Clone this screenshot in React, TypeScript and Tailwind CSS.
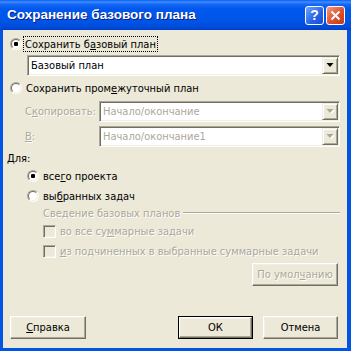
import React from 'react';

const dis = 'text-[#ACA899] [text-shadow:1px_1px_0_#ffffff]';

function Acc({ text, i }: { text: string; i: number }) {
  return (
    <>
      {text.slice(0, i)}
      <u>{text[i]}</u>
      {text.slice(i + 1)}
    </>
  );
}

function Radio({ checked }: { checked?: boolean }) {
  return (
    <span className="relative w-3 h-3 shrink-0 rounded-full border border-t-[#ACA899] border-l-[#ACA899] border-r-white border-b-white">
      <span className="absolute inset-0 flex items-center justify-center rounded-full border border-t-[#716F64] border-l-[#716F64] border-r-[#F1EFE2] border-b-[#F1EFE2] bg-white">
        {checked && <span className="w-1 h-1 rounded-[1px] bg-black" />}
      </span>
    </span>
  );
}

function Check() {
  return (
    <span className="w-[13px] h-[13px] shrink-0 border border-t-[#ACA899] border-l-[#ACA899] border-r-white border-b-white bg-[#ECE9D8] shadow-[inset_1px_1px_0_#716F64,inset_-1px_-1px_0_#F1EFE2]" />
  );
}

function Arrow({ disabled }: { disabled?: boolean }) {
  return (
    <svg width="8" height="5" viewBox="0 0 8 5">
      {disabled && <path d="M2 1h7l-3.5 4z" fill="#ffffff" />}
      <path d="M0.5 0h7l-3.5 4z" fill={disabled ? '#ACA899' : '#000000'} />
    </svg>
  );
}

function Combo({ value, disabled, className }: { value: string; disabled?: boolean; className?: string }) {
  return (
    <div
      className={`h-[21px] flex p-px bg-white border border-t-[#ACA899] border-l-[#ACA899] border-r-white border-b-white shadow-[inset_1px_1px_0_#716F64,inset_-1px_-1px_0_#F1EFE2] ${className ?? ''}`}
    >
      <div className={`flex-1 flex items-center pl-[2px] ${disabled ? 'text-[#ACA899]' : 'text-black'}`}>{value}</div>
      <div className="w-4 h-full flex items-center justify-center bg-[#ECE9D8] border border-t-[#F1EFE2] border-l-[#F1EFE2] border-r-[#716F64] border-b-[#716F64] shadow-[inset_1px_1px_0_#ffffff,inset_-1px_-1px_0_#ACA899]">
        <Arrow disabled={disabled} />
      </div>
    </div>
  );
}

function Btn({
  children,
  isDefault,
  disabled,
  className,
}: {
  children: React.ReactNode;
  isDefault?: boolean;
  disabled?: boolean;
  className?: string;
}) {
  const face = (
    <div
      className={`w-full h-full flex items-center justify-center bg-[#ECE9D8] border border-t-white border-l-white border-r-[#716F64] border-b-[#716F64] shadow-[inset_-1px_-1px_0_#ACA899,inset_1px_1px_0_#F1EFE2] ${disabled ? dis : 'text-black'}`}
    >
      {children}
    </div>
  );
  return (
    <div className={`h-[23px] ${isDefault ? 'border border-black' : ''} ${className ?? ''}`}>{face}</div>
  );
}

export default function App() {
  return (
    <div className="w-[351px] h-[351px] flex flex-col bg-[#0055E5] font-['DejaVu_Sans_Condensed','DejaVu_Sans',sans-serif] text-[11px] leading-none select-none">
      {/* Title bar */}
      <div className="h-[30px] shrink-0 flex items-center pl-[7px] pr-[6px] bg-[linear-gradient(to_bottom,#0A5EF8_0%,#3D8EFF_7%,#1667F5_14%,#0058EE_30%,#0055E6_70%,#004CDB_90%,#003FC8_100%)]">
        <span className="flex-1 text-white font-bold text-[13.5px] font-['Liberation_Sans',Arial,sans-serif] [text-shadow:1px_1px_0_#0A1E8C]">
          Сохранение базового плана
        </span>
        <div className="flex gap-[2px]">
          <div className="w-[19px] h-[19px] rounded-[3px] border border-white bg-[linear-gradient(135deg,#6FA4FF,#2562E8_60%,#1A4FD0)] flex items-center justify-center text-white font-bold text-[14px] font-['Liberation_Sans',Arial,sans-serif]">
            ?
          </div>
          <div className="w-[19px] h-[19px] rounded-[3px] border border-white bg-[linear-gradient(135deg,#F29B80,#E0502A_55%,#C23A18)] flex items-center justify-center">
            <svg width="11" height="11" viewBox="0 0 11 11">
              <path d="M1.5 1.5l8 8M9.5 1.5l-8 8" stroke="#ffffff" strokeWidth="2" />
            </svg>
          </div>
        </div>
      </div>

      {/* Body */}
      <div className="flex-1 ml-[3px] mr-[4px] mb-[3px] bg-[#ECE9D8] flex flex-col text-black pt-[6px]">
        <div className="h-4 flex items-center pl-[7px]">
          <Radio checked />
          <span className="ml-px h-4 flex items-center px-px border border-dotted border-black">
            Сохранить б<u>а</u>зовый план
          </span>
        </div>
        <Combo value="Базовый план" className="mt-[3px] ml-[24px] w-[313px]" />

        <div className="mt-[4px] h-4 flex items-center pl-[7px] gap-[4px]">
          <Radio />
          <span>
            <Acc text="Сохранить промежуточный план" i={14} />
          </span>
        </div>

        <div className="mt-[5px] flex items-center pl-[22px]">
          <span className={`w-[74px] ${dis}`}>
            <Acc text="Скопировать:" i={1} />
          </span>
          <Combo value="Начало/окончание" disabled className="w-[241px]" />
        </div>
        <div className="mt-[4px] flex items-center pl-[22px]">
          <span className={`w-[74px] ${dis}`}>
            <u>В</u>:
          </span>
          <Combo value="Начало/окончание1" disabled className="w-[241px]" />
        </div>

        <div className="mt-[3px] h-4 flex items-center pl-[4px]">Для:</div>
        <div className="mt-[2px] h-4 flex items-center pl-[24px] gap-[4px]">
          <Radio checked />
          <span>
            <Acc text="всего проекта" i={3} />
          </span>
        </div>
        <div className="mt-[4px] h-4 flex items-center pl-[24px] gap-[4px]">
          <Radio />
          <span>
            <Acc text="выбранных задач" i={2} />
          </span>
        </div>

        <div className="mt-[1px] h-4 flex items-center pl-[40px] pr-[7px]">
          <span className={dis}>Сведение базовых планов</span>
          <span className="flex-1 ml-[3px] border-t border-t-[#ACA899] border-b border-b-white" />
        </div>
        <div className="mt-[2px] h-4 flex items-center pl-[40px] gap-[4px]">
          <Check />
          <span className={dis}>
            <Acc text="во все суммарные задачи" i={9} />
          </span>
        </div>
        <div className="mt-[4px] h-4 flex items-center pl-[40px] gap-[4px]">
          <Check />
          <span className={dis}>
            <Acc text="из подчиненных в выбранные суммарные задачи" i={0} />
          </span>
        </div>

        <div className="mt-[4px] flex justify-end pr-[9px]">
          <Btn disabled className="w-[86px]">
            <span>
              По умол<u>ч</u>анию
            </span>
          </Btn>
        </div>

        <div className="mt-[30px] flex pl-[7px] pr-[9px]">
          <Btn className="w-[76px]">
            <span>
              <u>С</u>правка
            </span>
          </Btn>
          <div className="flex-1" />
          <Btn isDefault className="w-[75px]">
            ОК
          </Btn>
          <Btn className="w-[75px] ml-[10px]">Отмена</Btn>
        </div>
      </div>
    </div>
  );
}
